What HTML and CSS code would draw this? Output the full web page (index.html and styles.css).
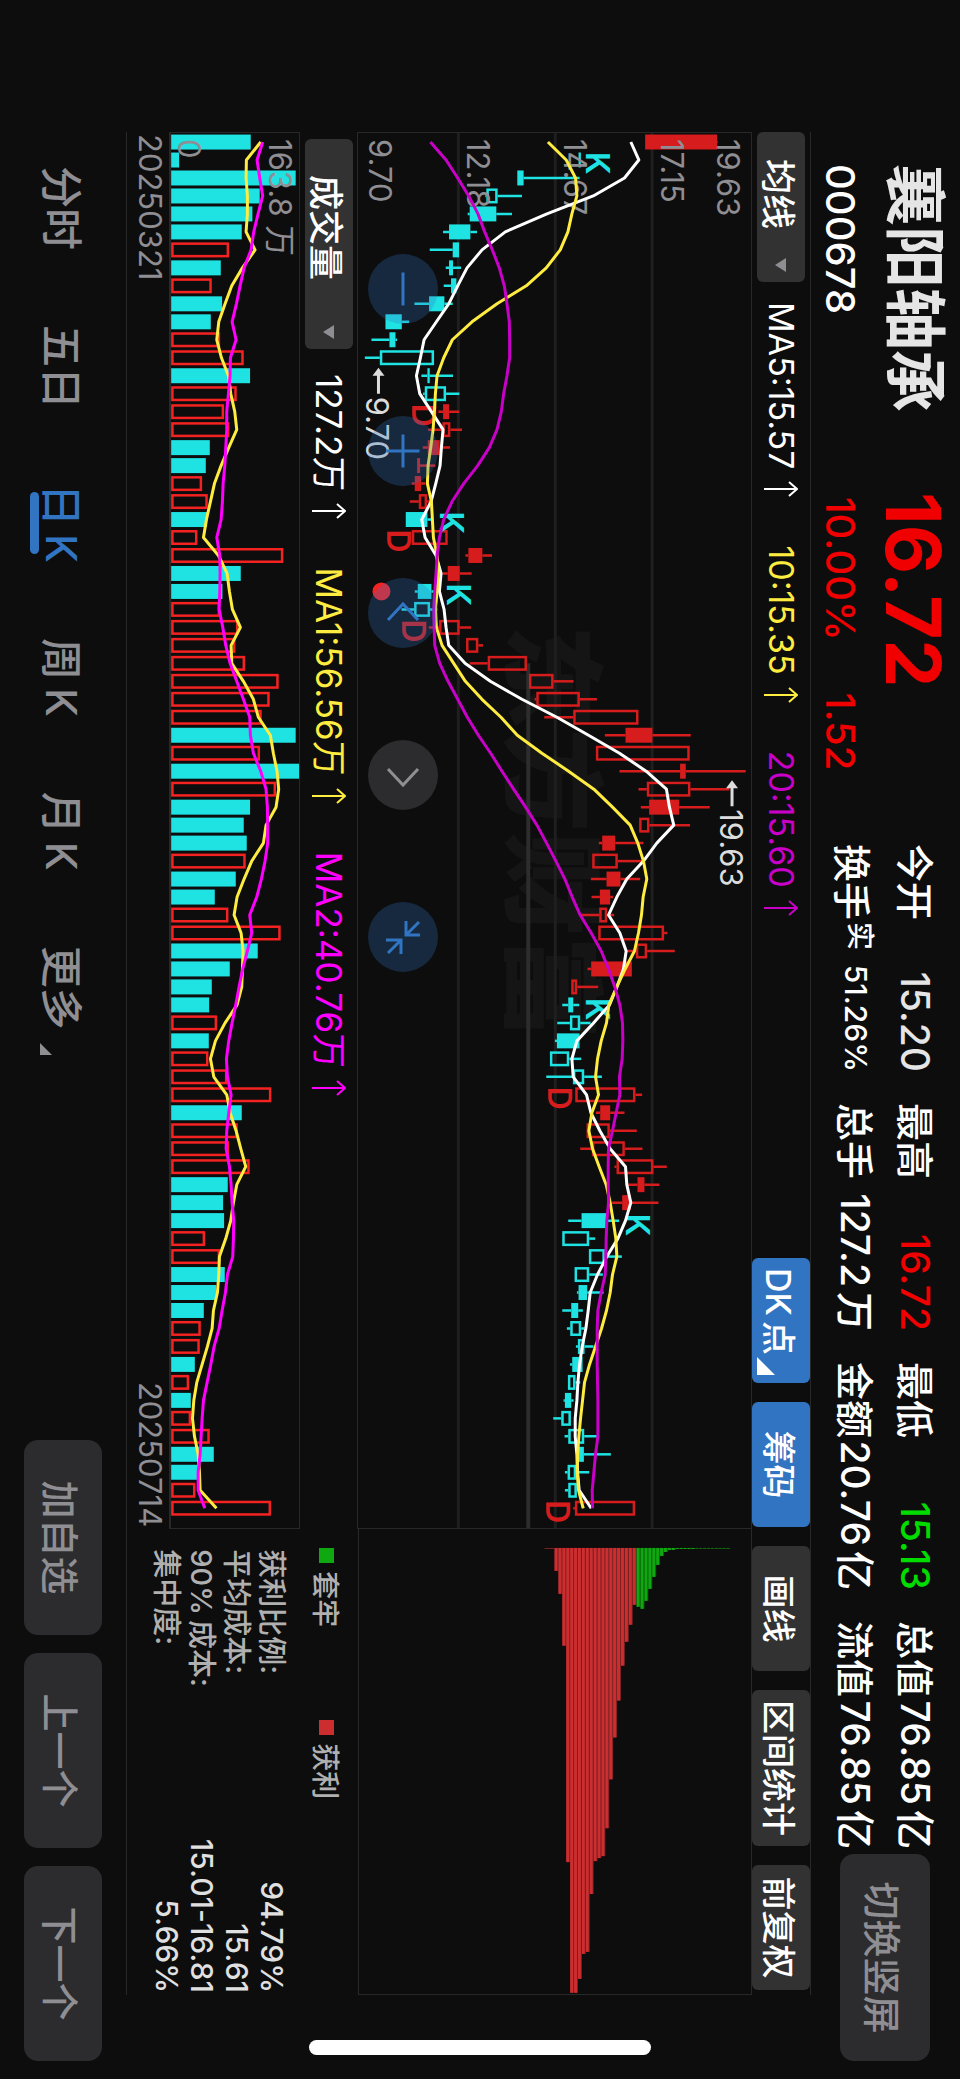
FILE: index.html
```html
<!DOCTYPE html>
<html lang="zh-CN">
<head>
<meta charset="utf-8">
<meta name="viewport" content="width=device-width, initial-scale=1">
<title>襄阳轴承 000678</title>
<link rel="stylesheet" href="styles.css">
</head>
<body>
<svg class="defs" aria-hidden="true">
  <symbol id="up" viewBox="0 0 16 34"><path d="M8 34V1M1 9 8 1l7 8"/></symbol>
</svg>
<div class="frame">
<main class="screen">
  <header class="quote">
    <div class="identity">
      <h1 class="name">襄阳轴承</h1>
      <p class="code">000678</p>
    </div>
    <div class="price">
      <p class="last">16.72</p>
      <p class="change"><span>10.00%</span><span>1.52</span></p>
    </div>
    <dl class="stats">
      <div class="stat"><dt>今开</dt><dd class="flat">15.20</dd></div>
      <div class="stat"><dt>最高</dt><dd class="rise">16.72</dd></div>
      <div class="stat"><dt>最低</dt><dd class="fall">15.13</dd></div>
      <div class="stat"><dt>总值</dt><dd>76.85<span class="unit">亿</span></dd></div>
      <div class="stat turnover"><dt>换手<sup class="real">实</sup></dt><dd class="small">51.26%</dd></div>
      <div class="stat"><dt>总手</dt><dd>127.2<span class="unit">万</span></dd></div>
      <div class="stat"><dt>金额</dt><dd>20.76<span class="unit">亿</span></dd></div>
      <div class="stat"><dt>流值</dt><dd>76.85<span class="unit">亿</span></dd></div>
    </dl>
    <button class="soft switch" type="button">切换竖屏</button>
  </header>

  <section class="board">
    <div class="toolbar">
      <button class="picker" type="button">均线<i class="caret"></i></button>
      <ul class="legend">
        <li class="white">MA5:15.57<svg class="arrow"><use href="#up"/></svg></li>
        <li class="yellow">10:15.35<svg class="arrow"><use href="#up"/></svg></li>
        <li class="purple">20:15.60<svg class="arrow"><use href="#up"/></svg></li>
      </ul>
      <div class="tools">
        <button class="tool on corner" type="button">DK<span class="unit">点</span></button>
        <button class="tool on" type="button">筹码</button>
        <button class="tool" type="button">画线</button>
        <button class="tool wide" type="button">区间统计</button>
        <button class="tool" type="button">前复权</button>
      </div>
    </div>

    <div class="panels">
      <div class="left">
        <div class="pricebox">
          <svg id="price" class="chart" viewBox="132 209 1397 393" role="img" aria-label="日K线"></svg>
          <div class="controls">
            <button class="round" type="button" aria-label="缩小"><svg viewBox="-35 -35 70 70"><path d="M-16.500 0h33"/></svg></button>
            <button class="round" type="button" aria-label="放大"><svg viewBox="-35 -35 70 70"><path d="M-16.500 0h33M0-16.500v33"/></svg></button>
            <button class="round" type="button" aria-label="向左"><svg viewBox="-35 -35 70 70"><path d="M7-15-9 0 7 15"/></svg></button>
            <button class="round gray" type="button" aria-label="向右"><svg viewBox="-35 -35 70 70"><path d="M-6-15 10 0-6 15"/></svg></button>
            <button class="round" type="button" aria-label="收起"><svg viewBox="-35 -35 70 70"><path d="M-16-3H-2V-17M-2-3-15-16M3 17V2H17M3 2 16 15"/></svg></button>
          </div>
        </div>
        <div class="volbar">
          <button class="picker long" type="button">成交量<i class="caret"></i></button>
          <ul class="legend">
            <li class="white">127.2万<svg class="arrow"><use href="#up"/></svg></li>
            <li class="yellow">MA1:56.56万<svg class="arrow"><use href="#up"/></svg></li>
            <li class="pink">MA2:40.76万<svg class="arrow"><use href="#up"/></svg></li>
          </ul>
        </div>
        <div class="volbox">
          <svg id="volume" class="chart" viewBox="132 661 1397 129" role="img" aria-label="成交量"></svg>
        </div>
        <div class="dates"><time>20250321</time><time>20250714</time></div>
      </div>
      <div class="right">
        <div class="chipbox">
          <svg id="chips" class="chart" viewBox="1529 209 466 393" role="img" aria-label="筹码分布"></svg>
        </div>
        <ul class="keys">
          <li><i class="box green"></i>套牢</li>
          <li><i class="box red"></i>获利</li>
        </ul>
        <dl class="costs">
          <div><dt>获利比例:</dt><dd>94.79%</dd></div>
          <div><dt>平均成本:</dt><dd>15.61</dd></div>
          <div><dt>90%<span class="unit">成本:</span></dt><dd>15.01-16.81</dd></div>
          <div><dt>集中度:</dt><dd>5.66%</dd></div>
        </dl>
      </div>
    </div>
  </section>

  <footer class="bottom">
    <nav class="tabs">
      <button class="tab" type="button">分时</button>
      <button class="tab" type="button">五日</button>
      <button class="tab active" type="button">日<span class="unit">K</span></button>
      <button class="tab" type="button">周<span class="unit">K</span></button>
      <button class="tab" type="button">月<span class="unit">K</span></button>
      <button class="tab more" type="button">更多</button>
    </nav>
    <div class="actions">
      <button class="soft" type="button">加自选</button>
      <button class="soft" type="button">上一个</button>
      <button class="soft" type="button">下一个</button>
    </div>
  </footer>
  <div class="home"></div>
</main>
</div>
<script src="charts.js"></script>
</body>
</html>
```

FILE: styles.css
```css
* { box-sizing: border-box; margin: 0; padding: 0; }

body {
  background: #0d0d0d;
  color: #fff;
  font-family: Inter, "Noto Sans CJK SC", sans-serif;
}

ul { list-style: none; }
button { font: inherit; color: inherit; border: 0; background: none; white-space: nowrap; }
.defs { position: absolute; width: 0; height: 0; }

/* The trading screen is landscape, turned to fit a portrait window. */
.frame { height: 100vh; overflow: clip; contain: paint; }
.screen {
  position: relative;
  display: flex;
  flex-direction: column;
  width: 100vh;
  height: 100vw;
  transform-origin: 0 0;
  transform: rotate(90deg) translateY(-100%);
}

.unit { margin-left: 5px; }

/* Quote header */
.quote {
  display: grid;
  grid-template-columns: 328px 352px 1fr 207px;
  height: 149px;
  padding: 0 18px 0 164px;
  white-space: nowrap;
}
.name { margin-top: 14px; font-size: 62px; line-height: 64px; font-weight: 700; color: #e5e5e5; }
.code { margin-top: 18px; font-size: 40px; line-height: 48px; font-weight: 500; }
.last { margin-top: 14px; font-size: 76px; line-height: 64px; font-weight: 700; color: #f00000; }
.change { display: flex; gap: 52px; margin-top: 18px; padding-left: 5px; font-size: 40px; line-height: 48px; font-weight: 500; color: #f00000; }

.stats {
  display: grid;
  grid-template-columns: repeat(4, 228px);
  grid-template-rows: 60px 60px;
  column-gap: 31px;
  padding-top: 15px;
  font-size: 38px;
  font-weight: 500;
  line-height: 60px;
}
.stat { display: flex; justify-content: space-between; }
.stat dd { font-size: 39px; }
.turnover { padding-top: 3px; }
.real { font-size: 28px; line-height: 28px; vertical-align: 12px; margin-left: 2px; }
.flat { color: #e5e5e5; }
.rise { color: #f00000; }
.fall { color: #00dc00; }
.stat .small { font-size: 30px; line-height: 52px; }

.soft {
  width: 195px;
  height: 78px;
  border-radius: 14px;
  background: #2c2c2e;
  color: #8e8e93;
  font-size: 38px;
  font-weight: 500;
}
.switch { width: 207px; height: 90px; margin-top: 30px; }

/* Board */
.board { margin: 0 84px 0 132px; border-top: 1px solid #282828; border-bottom: 1px solid #282828; }
.toolbar { display: flex; align-items: center; height: 58px; padding-right: 5px; }
.picker {
  display: flex;
  align-items: center;
  justify-content: space-between;
  width: 150px;
  height: 48px;
  padding: 0 10px 0 27px;
  border-radius: 6px;
  background: #323232;
  font-size: 35px;
  font-weight: 500;
}
.long { width: 210px; padding-left: 36px; }
.caret { border: 7px solid transparent; border-top: 11px solid #8e8e93; border-bottom: 0; }

.legend { display: flex; gap: 48px; margin-left: 20px; font-size: 34px; line-height: 48px; white-space: nowrap; }
.legend li { display: flex; align-items: center; gap: 12px; }
.arrow { width: 16px; height: 34px; fill: none; stroke: currentColor; stroke-width: 2; }
.white { color: #fff; }
.yellow { color: #ffec40; }
.purple { color: #c800c8; }
.pink { color: #ff00ff; }

.tools { display: flex; gap: 19px; margin-left: auto; }
.tool {
  position: relative;
  width: 125px;
  height: 58px;
  border-radius: 6px;
  background: #323232;
  font-size: 34px;
  font-weight: 500;
}
.wide { width: 156px; }
.on { background: #3174c2; }
.corner { padding-right: 18px; }
.corner::after {
  content: "";
  position: absolute;
  right: 8px;
  bottom: 5px;
  border: 9px solid #fff;
  border-top-color: transparent;
  border-left-color: transparent;
}

.panels { display: grid; grid-template-columns: 3fr 1fr; }
.chart { display: block; width: 100%; }
.pricebox { position: relative; border: 1px solid #282828; }
.chipbox { border: 1px solid #282828; border-left: 0; }
.controls { position: absolute; left: 121px; bottom: 10px; display: flex; gap: 92px; }
.round { width: 70px; height: 70px; border-radius: 50%; background: rgba(49, 116, 194, 0.28); color: #3174c2; }
.round svg { display: block; fill: none; stroke: currentColor; stroke-width: 3; }
.gray { background: #2c2c2e; color: #8e8e93; }
.volbar { display: flex; align-items: center; height: 57px; padding-left: 7px; }
.volbar .legend { margin-left: 25px; font-size: 35px; }
.volbox { border: 1px solid #282828; border-bottom-width: 2px; }
.dates { display: flex; justify-content: space-between; height: 42px; padding: 0 2px; font-size: 31px; line-height: 38px; color: #8e8e93; }

.keys { display: flex; height: 57px; padding: 6px 0 0 19px; font-size: 28px; font-weight: 500; color: #b0b0b0; }
.keys li { display: flex; align-items: center; gap: 8px; width: 172px; }
.box { width: 15px; height: 15px; }
.green { background: #10a810; }
.red { background: #cc2e30; }
.costs { padding: 12px 2px 0 20px; font-size: 29px; line-height: 35px; font-weight: 500; }
.costs div { display: flex; justify-content: space-between; }
.costs dt { color: #b0b0b0; }
.costs dd { color: #e0e0e0; font-size: 30px; }

/* Bottom bar */
.bottom { display: flex; justify-content: space-between; padding: 24px 18px 0 166px; }
.tabs { display: flex; align-items: flex-start; gap: 75px; }
.tab { position: relative; font-size: 42px; line-height: 82px; font-weight: 500; color: #8e8e93; }
.tab .unit { margin-left: 8px; }
.active { color: #3174c2; }
.active::after {
  content: "";
  position: absolute;
  left: 8px;
  bottom: 10px;
  width: 62px;
  height: 9px;
  border-radius: 5px;
  background: #3174c2;
}
.more::after {
  content: "";
  position: absolute;
  right: -25px;
  bottom: 20px;
  border: 6px solid #8e8e93;
  border-top-color: transparent;
  border-left-color: transparent;
}
.actions { display: flex; gap: 18px; }

.home {
  position: absolute;
  right: 24px;
  top: calc(50% - 171px);
  width: 15px;
  height: 342px;
  border-radius: 8px;
  background: #fff;
}

/* Chart drawing */
.grid { stroke: #1f1f1f; stroke-width: 3; }
.grid.strong { stroke: #2d2d2d; stroke-width: 4; }
.line { fill: none; stroke-width: 3; stroke-linejoin: round; }
.axis { font-size: 31px; fill: #8e8e93; }
.note { font-size: 31px; fill: #dcdcdc; }
.mark { font-size: 32px; font-weight: 600; }
.watermark { font-size: 104px; font-weight: 900; fill: #151515; }
```

FILE: charts.js
```js
const NS = 'http://www.w3.org/2000/svg';
const CYAN = '#1fe3e3', RED = '#d61c1c', VOLRED = '#f52222';
const STEP = 18, FIRST = 141, BODY = 15;

// kind (C/R solid, c/r hollow), low, body low, body high, high; thirds of a pixel
const candles = `R1935,1935,2151,2153 C1735,1735,1742,1742 C1551,1551,1570,1738 c1455,1458,1492,1565 C1402,1408,1488,1535
C1328,1346,1410,1430 C1288,1357,1376,1376 C1336,1346,1358,1382 C1330,1352,1368,1375 C1242,1286,1332,1357
C1155,1155,1204,1226 C1113,1167,1185,1190 c1093,1138,1301,1301 C1263,1281,1288,1358 c1268,1273,1337,1377
R1314,1328,1346,1377 r1283,1326,1350,1385 R1267,1282,1318,1349 R1250,1250,1259,1305 R1234,1243,1262,1275
r1228,1255,1280,1290 C1216,1216,1281,1292 r1234,1234,1342,1342 R1395,1404,1446,1475 R1326,1342,1378,1414
C1243,1252,1293,1313 c1203,1241,1289,1311 r1285,1316,1378,1412 r1397,1397,1434,1448 r1408,1462,1580,1580
r1586,1586,1660,1720 r1603,1608,1739,1790 r1632,1719,1915,1915 R1814,1876,1957,2072 r1787,1787,2069,2069
R1858,2040,2057,2237 r1915,1940,2071,2188 R1922,1947,2037,2129 r1917,1917,1948,2070 R1796,1806,1845,1930
r1776,1776,1853,1928 R1772,1819,1861,1920 R1774,1799,1830,1839 r1740,1797,1821,1842 r1794,1794,1992,2002
r1878,1907,1941,2024 R1762,1773,1895,1895 r1713,1713,1731,1794 C1686,1704,1719,1737 c1671,1709,1740,1771
C1664,1670,1738,1738 c1649,1649,1707,1743 c1638,1718,1752,1805 r1725,1725,1906,1926 R1787,1800,1830,1873
r1759,1759,1829,1910 r1740,1775,1874,1927 r1843,1849,1960,2000 R1878,1912,1933,1978 R1836,1866,1892,1975
C1704,1744,1818,1857 c1686,1686,1767,1785 c1766,1766,1814,1865 c1723,1723,1767,1808 C1730,1735,1761,1810
C1686,1713,1734,1748 c1700,1710,1743,1754 c1727,1733,1753,1780 C1709,1716,1747,1747 c1703,1703,1726,1740
C1690,1694,1713,1720 c1659,1683,1712,1712 c1693,1704,1752,1790 C1730,1730,1751,1832 c1694,1702,1728,1767
c1694,1704,1730,1730 r1719,1724,1905,1905`.split(/\s+/);

const volumes = `C752 C537 C887 C779 C757 C725 r687 C662 r635 C666 C632 r660 r731 C750 r710 r672 r688 C629 C617 r606 r623 C621
r592 r850 C722 C667 r660 r715 r706 r735 r836 r809 r785 C887 r780 C898 r828 C750 C731 C740 r737 C707 C644 r685 r842 C773 C689
C635 C627 r651 C626 r625 r682 r814 C725 r713 r687 r749 C683 C669 C672 r615 r660 C674 C648 C611 r602 r599 C584 r567 C572 r573
r629 C641 C595 r586 r813`.split(/\s+/);

const ma5 = [1892,1916,1873,1779,1640,1515,1445,1400,1372,1345,1308,1271,1260,1248,1258,1293,1328,1323,1319,1306,1292,1264,1274,1307,1322,1317,1331,1337,1345,1394,1470,1565,1670,1765,1858,1938,1999,2008,2021,1970,1930,1880,1850,1825,1859,1878,1870,1850,1828,1780,1730,1715,1719,1759,1772,1799,1830,1876,1880,1892,1876,1853,1820,1792,1770,1764,1757,1746,1738,1733,1730,1725,1725,1730,1732,1737,1773];
const ma10 = [1643,1698,1726,1730,1715,1703,1680,1638,1578,1490,1415,1356,1330,1310,1305,1302,1298,1291,1283,1281,1293,1296,1299,1310,1314,1310,1305,1308,1325,1360,1395,1445,1502,1551,1625,1705,1781,1837,1890,1913,1930,1940,1929,1924,1915,1903,1875,1850,1826,1819,1803,1792,1786,1795,1775,1766,1777,1797,1818,1830,1839,1847,1850,1837,1830,1819,1804,1786,1768,1753,1747,1741,1736,1732,1731,1735,1749];
const ma20 = [1290,1337,1372,1405,1433,1453,1476,1497,1512,1520,1527,1528,1528,1520,1510,1503,1490,1467,1432,1390,1355,1330,1317,1310,1307,1303,1300,1301,1303,1318,1343,1372,1401,1434,1471,1505,1540,1576,1610,1639,1667,1694,1716,1740,1773,1803,1825,1844,1859,1867,1868,1866,1858,1859,1848,1837,1825,1824,1824,1825,1820,1818,1817,1815,1803,1793,1791,1791,1791,1792,1793,1793,1793,1786,1781,1776,1777];
const vol5 = [782,739,738,742,742,738,765,727,695,675,656,650,664,685,692,704,710,686,663,643,631,619,610,655,681,688,697,721,693,695,730,760,775,811,820,831,836,828,798,790,755,732,711,702,723,729,727,725,711,675,646,631,641,680,690,708,722,737,710,700,692,677,658,656,652,640,636,622,606,590,581,577,583,594,598,600,649];
const vol10 = [788,771,779,788,774,761,753,732,720,709,696,708,691,690,685,680,680,677,674,669,667,663,650,659,660,659,657,668,677,690,710,730,749,751,760,782,798,802,803,803,795,784,770,749,755,742,728,717,707,696,686,679,682,693,686,680,678,688,693,696,701,700,698,682,676,666,657,642,632,621,610,606,603,600,594,594,614];

const profit = [23,46,98,315,446,446,432,407,405,347,314,311,309,281,232,190,153,118,94,77,57];
const trapped = [59,61,53,41,29,17,8,4,2,2,1,1,1,1,1,0.5,0.5,0.5,0.5,0.5,0.5,0.5,0.5,0.5];

const y = v => 960 - v / 3;
const x = i => FIRST + STEP * i;

function add(parent, tag, attrs, text) {
  const el = document.createElementNS(NS, tag);
  for (const k in attrs) el.setAttribute(k, attrs[k]);
  if (text) el.textContent = text;
  parent.append(el);
}

function bar(svg, cx, lo, hi, color, solid) {
  const top = y(hi), h = (hi - lo) / 3;
  if (solid) add(svg, 'rect', { x: cx - BODY / 2, y: top, width: BODY, height: h, fill: color });
  else add(svg, 'rect', { x: cx - BODY / 2 + 1.25, y: top + 1.25, width: BODY - 2.5, height: Math.max(h - 2.5, 1), fill: 'none', stroke: color, 'stroke-width': 2.5 });
}

function line(svg, data, color) {
  add(svg, 'polyline', { class: 'line', stroke: color, points: data.map((v, i) => x(i) + ',' + y(v)).join(' ') });
}

function hline(svg, x1, yy, cls) {
  add(svg, 'line', { class: cls, x1, x2: 1529, y1: yy, y2: yy });
}

function drawPrice() {
  const svg = document.getElementById('price');
  add(svg, 'text', { class: 'watermark', x: 624, y: 446 }, '东方财富');
  [308, 405, 502].forEach(v => hline(svg, 132, v, 'grid'));
  hline(svg, 663, 432, 'grid strong');
  candles.forEach((c, i) => {
    const kind = c[0];
    const [low, lo, hi, high] = c.slice(1).split(',').map(Number);
    const color = /c/i.test(kind) ? CYAN : RED;
    const d = `M${x(i)} ${y(high)}V${y(hi)}M${x(i)} ${y(lo)}V${y(low)}`;
    add(svg, 'path', { d, stroke: color, 'stroke-width': 2.5 });
    bar(svg, x(i), lo, hi, color, kind < 'a');
  });
  [['19.63', 243], ['17.15', 299], ['14.67', 396], ['12.18', 493], ['9.70', 591]]
    .forEach(([t, v]) => add(svg, 'text', { class: 'axis', x: 138, y: v }, t));
  [[151, 374], [511, 520], [583, 513], [998, 374], [1214, 334]]
    .forEach(([a, b]) => add(svg, 'text', { class: 'mark', x: a, y: b, fill: CYAN }, 'K'));
  [[403, 548], [529, 573], [619, 558], [1087, 412], [1501, 414]]
    .forEach(([a, b]) => add(svg, 'text', { class: 'mark', x: a, y: b, fill: RED }, 'D'));
  [[367, 582, '9.70'], [780, 228, '19.63']].forEach(([a, b, t]) => {
    add(svg, 'path', { d: `M${a} ${b}l8-6v4.500h18v3h-18v4.500z`, fill: '#dcdcdc' });
    add(svg, 'text', { class: 'note', x: a + 29, y: b + 12 }, t);
  });
  add(svg, 'circle', { cx: 591, cy: 579, r: 9, fill: VOLRED });
  line(svg, ma5, '#fff');
  line(svg, ma10, '#ffec40');
  line(svg, ma20, '#c800c8');
}

function drawVolume() {
  const svg = document.getElementById('volume');
  volumes.forEach((v, i) => {
    const solid = v[0] === 'C';
    bar(svg, x(i), 513, Number(v.slice(1)), solid ? CYAN : VOLRED, solid);
  });
  add(svg, 'text', { class: 'axis', x: 138, y: 691 }, '163.8 万');
  add(svg, 'text', { class: 'axis', x: 138, y: 782 }, '0');
  line(svg, vol5, '#ffec40');
  line(svg, vol10, '#ff00ff');
}

function drawChips() {
  const svg = document.getElementById('chips');
  const pitch = 3.92, base = 406;
  profit.concat(trapped).forEach((len, k) => {
    const won = k < profit.length;
    const top = base - pitch * (k + 1);
    add(svg, 'rect', { x: 1548, y: top, width: len, height: pitch, fill: won ? '#7a2224' : '#0c600c' });
    add(svg, 'rect', { x: 1548, y: top + 1, width: len, height: pitch - 1, fill: won ? '#cc2e30' : '#10a810' });
  });
  add(svg, 'rect', { x: 1548, y: base, width: 1, height: 10, fill: '#7a2224' });
}

drawPrice();
drawVolume();
drawChips();
```
